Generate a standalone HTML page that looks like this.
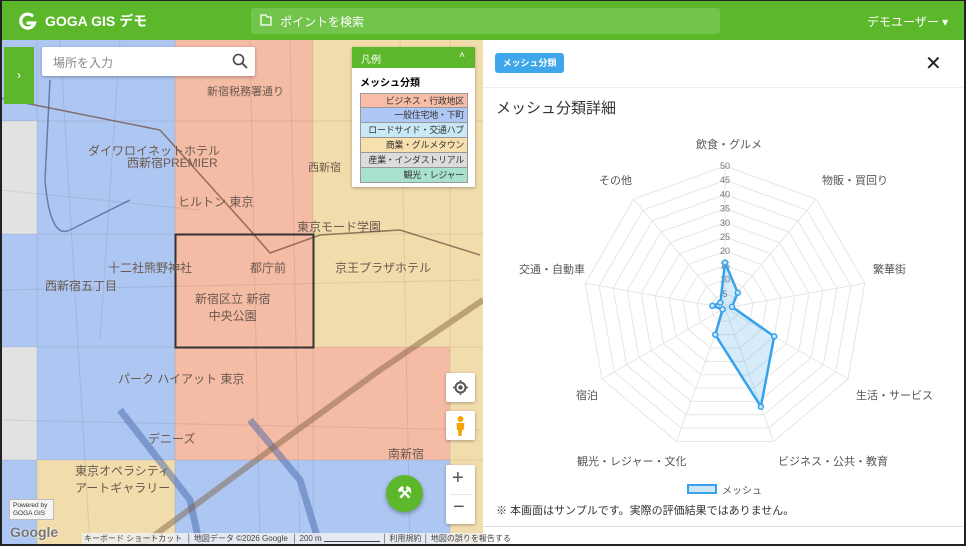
<!DOCTYPE html>
<html><head><meta charset="utf-8">
<style>
*{box-sizing:border-box;margin:0;padding:0}
body{width:966px;height:546px;overflow:hidden;font-family:"Liberation Sans","Noto Sans CJK JP",sans-serif;background:#fff;position:relative}
.frame{position:absolute;inset:0;border:2px solid #222;border-top:1px solid #222;z-index:50;pointer-events:none}
.hdr{position:absolute;left:0;top:0;width:966px;height:40px;background:#5cb82a;color:#fff}
.abs{position:absolute}
.map{position:absolute;left:0;top:40px;width:483px;height:506px;overflow:hidden;background:#ece8e0}
.c{position:absolute}
.b{background:#adc6f2}.s{background:#f4bba5}.y{background:#f1dcac}.g{background:#e2e2e2}
.lbl{position:absolute;font-size:11px;color:#555;white-space:nowrap}
.ml{position:absolute;font-size:11px;color:#6a5a50;white-space:nowrap}
.btn{position:absolute;background:#fff;box-shadow:0 1px 3px rgba(0,0,0,.3);border-radius:2px}
.lg div{border:1px solid #999;border-top:0;padding:0 3px;height:15px;line-height:14px;white-space:nowrap;letter-spacing:-.3px}
</style></head><body>
<div class="frame"></div>
<div class="hdr">
  <svg class="abs" style="left:18px;top:11px" width="20" height="20" viewBox="0 0 20 20"><path d="M14 4.5A7 7 0 1 0 16.5 12H10" fill="none" stroke="#fff" stroke-width="3.2" stroke-linecap="round"/></svg>
  <div class="abs" style="left:45px;top:11px;font-size:14px;font-weight:bold">GOGA GIS デモ</div>
  <div class="abs" style="left:251px;top:8px;width:469px;height:26px;background:#72c44a;border-radius:3px"></div>
  <svg class="abs" style="left:260px;top:14px" width="12" height="12" viewBox="0 0 12 12"><path d="M1 1h5l1 2h4v8H1z" fill="none" stroke="#fff" stroke-width="1.3"/></svg>
  <div class="abs" style="left:280px;top:13px;font-size:12px">ポイントを検索</div>
  <div class="abs" style="left:867px;top:13px;font-size:12px">デモユーザー ▾</div>
</div>
<div class="map">
  <div class="c b" style="left:0;top:0;width:37px;height:81px"></div>
  <div class="c g" style="left:0;top:81px;width:37px;height:113px"></div>
  <div class="c b" style="left:0;top:194px;width:37px;height:113px"></div>
  <div class="c g" style="left:0;top:307px;width:37px;height:113px"></div>
  <div class="c b" style="left:0;top:420px;width:37px;height:86px"></div>
  <div class="c b" style="left:37px;top:0;width:138px;height:420px"></div>
  <div class="c y" style="left:37px;top:420px;width:138px;height:86px"></div>
  <div class="c s" style="left:175px;top:0;width:138px;height:420px"></div>
  <div class="c b" style="left:175px;top:420px;width:138px;height:86px"></div>
  <div class="c y" style="left:313px;top:0;width:137px;height:307px"></div>
  <div class="c s" style="left:313px;top:307px;width:137px;height:113px"></div>
  <div class="c b" style="left:313px;top:420px;width:137px;height:86px"></div>
  <div class="c y" style="left:450px;top:0;width:33px;height:506px"></div>
  <svg class="abs" style="left:0;top:0" width="483" height="506">
    <g fill="none" stroke="#000" stroke-opacity=".08" stroke-width="1">
      <path d="M0 81H483M0 194H483M0 307H483M0 420H483M37 0V506M175 0V506M313 0V506M450 0V506"/>
      <path d="M60 0L90 506M120 0L100 300M0 150L200 170M250 0L260 506M0 380L480 390M290 0L300 506M400 0L410 506M0 250L480 240"/>
    </g>
    <path d="M0 58L160 90L250 190L270 213L320 195L400 190L480 215" fill="none" stroke="#6b4a3a" stroke-width="1.5" opacity=".7"/>
    <path d="M50 40L45 140Q50 200 70 190L130 160" fill="none" stroke="#3a4a7a" stroke-width="1.5" opacity=".6"/>
    <path d="M120 370L190 460L200 506" fill="none" stroke="#4a6aaa" stroke-width="7" opacity=".5"/>
    <path d="M250 380L300 440L320 506" fill="none" stroke="#4a6aaa" stroke-width="7" opacity=".5"/>
    <path d="M140 506L270 410L380 330L483 260" fill="none" stroke="#7a5a3a" stroke-width="6" opacity=".45"/>
    <rect x="175.5" y="194.5" width="138" height="113" fill="none" stroke="#333" stroke-width="2"/>
  </svg>
  <div class="ml" style="left:207px;top:43px">新宿税務署通り</div>
  <div class="ml" style="left:88px;top:102px;font-size:12px">ダイワロイネットホテル</div>
  <div class="ml" style="left:127px;top:114px;font-size:12px">西新宿PREMIER</div>
  <div class="ml" style="left:178px;top:153px;font-size:12px">ヒルトン 東京</div>
  <div class="ml" style="left:297px;top:178px;font-size:12px">東京モード学園</div>
  <div class="ml" style="left:108px;top:219px;font-size:12px">十二社熊野神社</div>
  <div class="ml" style="left:250px;top:219px;font-size:12px">都庁前</div>
  <div class="ml" style="left:335px;top:219px;font-size:12px">京王プラザホテル</div>
  <div class="ml" style="left:45px;top:237px;font-size:12px">西新宿五丁目</div>
  <div class="ml" style="left:195px;top:250px;font-size:12px;text-align:center">新宿区立 新宿<br>中央公園</div>
  <div class="ml" style="left:118px;top:330px;font-size:12px">パーク ハイアット 東京</div>
  <div class="ml" style="left:148px;top:390px;font-size:12px">デニーズ</div>
  <div class="ml" style="left:388px;top:405px;font-size:12px">南新宿</div>
  <div class="ml" style="left:75px;top:422px;font-size:12px">東京オペラシティ<br>アートギャラリー</div>
  <div class="ml" style="left:308px;top:119px">西新宿</div>
</div>
<div class="abs" style="left:4px;top:47px;width:30px;height:57px;background:#5cb82a;color:#fff;font-size:12px;text-align:center;line-height:57px">›</div>
<div class="abs" style="left:42px;top:47px;width:213px;height:29px;background:#fff;border-radius:2px;box-shadow:0 1px 3px rgba(0,0,0,.3)">
  <div class="abs" style="left:11px;top:7px;font-size:12px;color:#888">場所を入力</div>
  <svg class="abs" style="left:190px;top:6px" width="16" height="16" viewBox="0 0 16 16"><circle cx="6.5" cy="6.5" r="5" fill="none" stroke="#444" stroke-width="1.6"/><path d="M10 10l5 5" stroke="#444" stroke-width="1.8"/></svg>
</div>
<div class="abs" style="left:352px;top:47px;width:123px;height:140px;background:#fff;box-shadow:0 1px 3px rgba(0,0,0,.3)">
  <div style="height:21px;background:#5cb82a;color:#fff;font-size:10px;padding:4px 9px;position:relative">凡例<span style="position:absolute;right:10px;top:3px">˄</span></div>
  <div style="font-size:10px;font-weight:bold;padding:6px 8px 4px">メッシュ分類</div>
  <div class="lg" style="margin:0 7px 0 8px;font-size:9px;text-align:right;color:#333">
    <div style="background:#f7bda6;border-top:1px solid #999">ビジネス・行政地区</div>
    <div style="background:#aec7f4">一般住宅地・下町</div>
    <div style="background:#c9e8f8">ロードサイド・交通ハブ</div>
    <div style="background:#f8dfae">商業・グルメタウン</div>
    <div style="background:#dcdcdc">産業・インダストリアル</div>
    <div style="background:#a8e2cc">観光・レジャー</div>
  </div>
</div>
<div class="btn" style="left:446px;top:373px;width:29px;height:29px"><svg width="29" height="29"><circle cx="14.5" cy="14.5" r="5" fill="none" stroke="#555" stroke-width="2"/><circle cx="14.5" cy="14.5" r="2.2" fill="#555"/><path d="M14.5 7v2.5M14.5 19.5V22M7 14.5h2.5M19.5 14.5H22" stroke="#555" stroke-width="1.5"/></svg></div>
<div class="btn" style="left:446px;top:411px;width:29px;height:29px"><svg width="29" height="29"><circle cx="14.5" cy="8" r="3" fill="#f5a300"/><path d="M10.5 12h8l-1 7h-1.5l-.5 6h-3l-.5-6H11z" fill="#f5a300"/></svg></div>
<div class="btn" style="left:446px;top:465px;width:29px;height:59px"><div style="position:absolute;left:6px;top:2px;font-size:20px;color:#555">+</div><div style="position:absolute;left:4px;right:4px;top:29px;border-top:1px solid #e5e5e5"></div><div style="position:absolute;left:7px;top:31px;font-size:20px;color:#555">−</div></div>
<div class="abs" style="left:386px;top:475px;width:37px;height:37px;border-radius:50%;background:#5cb82a;box-shadow:0 2px 4px rgba(0,0,0,.3);color:#fff;font-size:16px;text-align:center;line-height:37px;font-weight:bold">⚒</div>
<div class="abs" style="left:9px;top:499px;width:45px;height:21px;background:#f6f6f6;border:1px solid #bbb;font-size:6.5px;line-height:8px;padding:2px 3px;color:#333;white-space:nowrap">Powered by<br>GOGA GIS</div>
<div class="abs" style="left:10px;top:524px;font-size:14px;font-weight:bold;color:#777;text-shadow:0 0 2px #fff">Google</div>
<div class="abs" style="left:82px;top:533px;width:401px;height:11px;background:rgba(240,240,240,.85);font-size:8px;color:#444;white-space:nowrap;line-height:11px;padding-left:2px">キーボード ショートカット &nbsp;│ 地図データ ©2026 Google &nbsp;│ 200 m ▁▁▁▁▁▁▁ │ 利用規約 │ 地図の誤りを報告する</div>
<div class="abs" style="left:495px;top:53px;width:69px;height:20px;background:#3ea6ea;border-radius:3px;color:#fff;font-size:9px;font-weight:bold;text-align:center;line-height:20px">メッシュ分類</div>
<div class="abs" style="left:925px;top:51px;font-size:20px;color:#222">✕</div>
<div class="abs" style="left:483px;top:87px;width:480px;border-top:1px solid #eee"></div>
<div class="abs" style="left:496px;top:97px;font-size:15px;color:#333">メッシュ分類詳細</div>
<svg class="abs" id="radar" style="left:483px;top:120px" width="483" height="400"></svg>
<div class="lbl" style="left:696px;top:136px">飲食・グルメ</div>
<div class="lbl" style="left:822px;top:172px">物販・買回り</div>
<div class="lbl" style="left:873px;top:261px">繁華街</div>
<div class="lbl" style="left:856px;top:387px">生活・サービス</div>
<div class="lbl" style="left:778px;top:453px">ビジネス・公共・教育</div>
<div class="lbl" style="left:577px;top:453px">観光・レジャー・文化</div>
<div class="lbl" style="left:576px;top:387px">宿泊</div>
<div class="lbl" style="left:519px;top:261px">交通・自動車</div>
<div class="lbl" style="left:599px;top:172px">その他</div>
<div class="abs" style="left:687px;top:484px;width:30px;height:10px;background:#cfe6f7;border:2px solid #36a2eb"></div>
<div class="lbl" style="left:722px;top:482px;font-size:10px">メッシュ</div>
<div class="abs" style="left:496px;top:502px;font-size:11px;color:#333">※ 本画面はサンプルです。実際の評価結果ではありません。</div>
<div class="abs" style="left:483px;top:526px;width:480px;border-top:1px solid #ddd"></div>
<script>
(function(){
var s=document.getElementById('radar'),cx=242,cy=188,R=142,n=9,h='';
function pt(i,r){var a=-Math.PI/2+i*2*Math.PI/n;return [(cx+r*Math.cos(a)).toFixed(1),(cy+r*Math.sin(a)).toFixed(1)];}
for(var k=1;k<=10;k++){var p=[];for(var i=0;i<n;i++)p.push(pt(i,R*k/10).join(','));h+='<polygon points="'+p.join(' ')+'" fill="none" stroke="#e6e6e6"/>';}
for(var i=0;i<n;i++){var q=pt(i,R);h+='<line x1="'+cx+'" y1="'+cy+'" x2="'+q[0]+'" y2="'+q[1]+'" stroke="#e6e6e6"/>';}
for(var k=1;k<=10;k++){h+='<text x="'+cx+'" y="'+(cy-R*k/10+3)+'" font-size="9" fill="#777" text-anchor="middle" font-family="Liberation Sans">'+(k*5)+'</text>';}
var v=[16,7,2.5,20,37,10,1,4.5,2.5],p=[];
for(var i=0;i<n;i++)p.push(pt(i,R*v[i]/50));
h+='<polygon points="'+p.map(function(a){return a.join(',')}).join(' ')+'" fill="rgba(54,162,235,.2)" stroke="#36a2eb" stroke-width="2.5" stroke-linejoin="round"/>';
p.forEach(function(a){h+='<circle cx="'+a[0]+'" cy="'+a[1]+'" r="2.5" fill="#cfe6f7" stroke="#36a2eb" stroke-width="1.5"/>';});
s.innerHTML=h;
})();
</script>
</body></html>
